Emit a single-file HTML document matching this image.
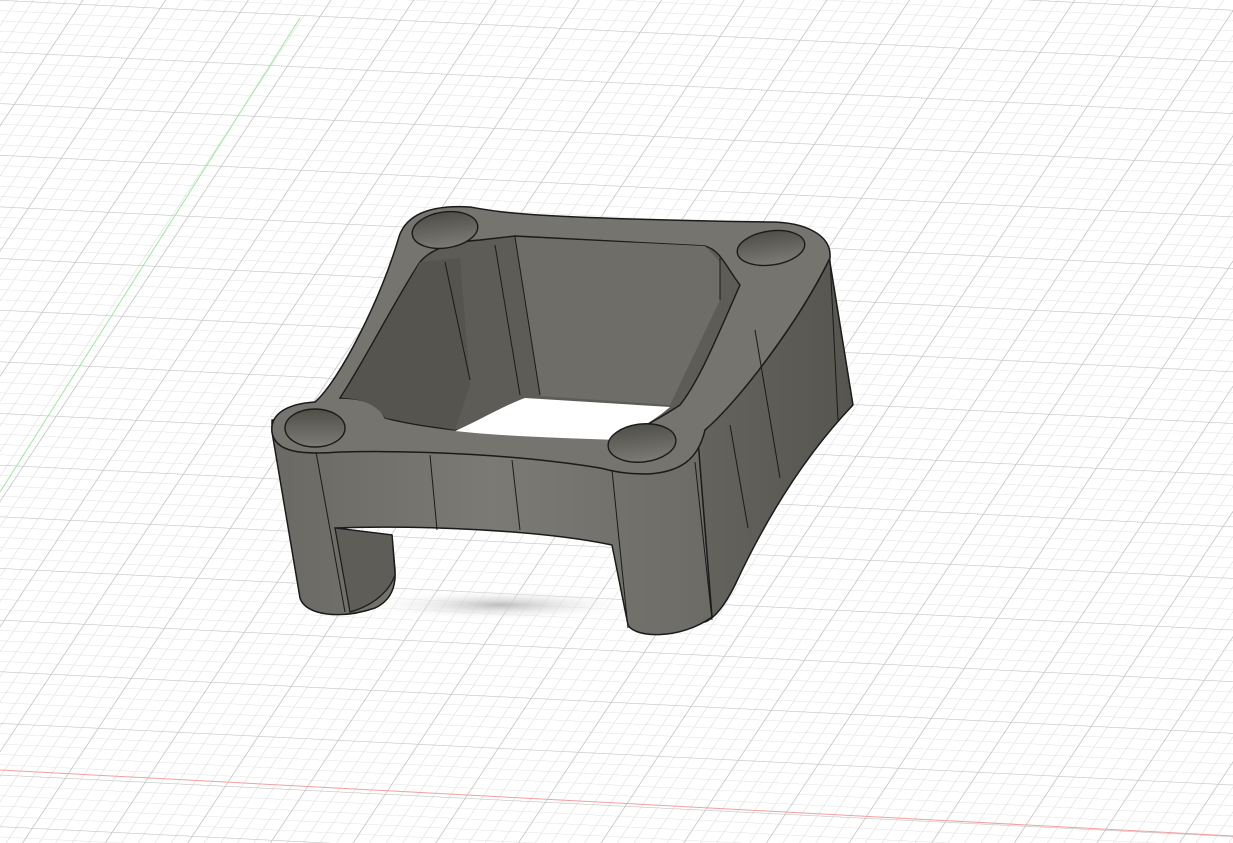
<!DOCTYPE html>
<html><head><meta charset="utf-8"><style>html,body{margin:0;padding:0;background:#fff;overflow:hidden}svg{display:block}</style></head>
<body>
<svg width="1233" height="843" viewBox="0 0 1233 843" xmlns="http://www.w3.org/2000/svg">
<defs>
<pattern id="minor" width="10" height="10" patternUnits="userSpaceOnUse" patternTransform="matrix(1.6 0.08 -0.66 1.0 0 0)">
<path d="M0 0H10M0 0V10" stroke="#dedede" stroke-width="0.9" fill="none"/>
</pattern>
<pattern id="major" width="50" height="50" patternUnits="userSpaceOnUse" patternTransform="matrix(1.6 0.08 -0.66 1.0 0 0)">
<path d="M0 0H50M0 0V50" stroke="#c2c2c2" stroke-width="1" fill="none"/>
</pattern>
<linearGradient id="front" x1="0" x2="1"><stop offset="0" stop-color="#6a6964"/><stop offset="0.5" stop-color="#7b7a74"/><stop offset="1" stop-color="#6c6b66"/></linearGradient>
<linearGradient id="right" x1="0" x2="1"><stop offset="0" stop-color="#65645f"/><stop offset="1" stop-color="#56554f"/></linearGradient>
<linearGradient id="hole" x1="0" y1="0" x2="0" y2="1"><stop offset="0" stop-color="#4f4e49"/><stop offset="1" stop-color="#7c7b75"/></linearGradient>
<radialGradient id="sh" cx="0.5" cy="0.5" r="0.5"><stop offset="0" stop-color="#bdbdbd"/><stop offset="1" stop-color="#fff" stop-opacity="0"/></radialGradient>
</defs>
<rect width="1233" height="843" fill="#fff"/>
<rect width="1233" height="843" fill="url(#minor)"/>
<rect width="1233" height="843" fill="url(#major)"/>
<line x1="300" y1="18" x2="0" y2="492" stroke="#9ee69e" stroke-width="1"/>
<line x1="0" y1="770" x2="1233" y2="836" stroke="#f2a0a0" stroke-width="1"/>
<ellipse cx="500" cy="605" rx="140" ry="16" fill="url(#sh)"/>
<!-- right wall -->
<path d="M688 470 L700 420 C740 380 800 320 828 250 L853 405 C810 450 770 510 735 585 C725 605 715 618 705 622 Z" fill="url(#right)" stroke="#1a1a1a" stroke-width="1.5" stroke-linejoin="round"/>
<!-- front wall -->
<path d="M272 432 L300 598 C305 615 340 620 375 608 C392 600 396 585 395 570 L392 535 L335 528 C420 525 540 530 612 545 L628 625 C635 638 680 640 712 617 L698 440 L272 420 Z" fill="url(#front)" stroke="#1a1a1a" stroke-width="1.5" stroke-linejoin="round"/>
<!-- leg inner -->
<path d="M335 528 L392 535 L395 575 C390 590 375 605 350 612 Z" fill="#5e5d58" stroke="#1a1a1a" stroke-width="1.2"/>
<!-- top face -->
<path d="M272 432 C270 415 285 404 315 402 C340 380 380 300 398 240 C405 212 435 205 470 207 C500 212 520 218 770 222 C805 222 832 235 830 258 C800 320 740 400 705 430 C698 460 680 472 648 474 C620 474 610 470 600 468 C520 455 420 450 340 452 C300 455 275 452 272 432 Z" fill="#75746e" stroke="#1a1a1a" stroke-width="1.5" stroke-linejoin="round"/>
<!-- opening -->
<path d="M340 398 C365 360 395 300 420 262 C430 250 450 242 480 240 L515 236 L705 246 C720 250 725 265 740 285 C720 330 700 380 680 405 C665 415 655 420 645 426 C600 438 560 438 455 430 C420 426 400 422 385 418 C380 405 365 398 340 398 Z" fill="#5d5c57" stroke="#1a1a1a" stroke-width="1.4"/>
<path d="M515 237 L705 246 L720 262 L720 300 L670 405 L540 396 Z" fill="#6e6d68"/>
<path d="M420 262 L460 258 L470 385 L455 430 L385 418 C378 405 360 398 342 398 Z" fill="#55544f"/>
<path d="M455 431 C480 420 505 405 525 398 L670 407 C655 420 640 428 618 440 C560 438 500 436 455 431 Z" fill="#fff"/>
<path d="M515 237 L540 395 M445 262 L470 380 M495 245 L520 395 M720 258 L720 300" stroke="#1a1a1a" stroke-width="1" fill="none"/>
<!-- holes -->
<ellipse cx="315" cy="428" rx="30" ry="19" fill="url(#hole)" stroke="#1a1a1a" stroke-width="1.4"/>
<ellipse cx="445" cy="230" rx="33" ry="18" transform="rotate(-8 445 230)" fill="url(#hole)" stroke="#1a1a1a" stroke-width="1.4"/>
<ellipse cx="771" cy="248" rx="34" ry="17" transform="rotate(-8 771 248)" fill="url(#hole)" stroke="#1a1a1a" stroke-width="1.4"/>
<ellipse cx="642" cy="443" rx="34" ry="19" transform="rotate(-6 642 443)" fill="url(#hole)" stroke="#1a1a1a" stroke-width="1.4"/>
<!-- edge lines -->
<path d="M316 452 L345 612 M430 455 L437 530 M512 460 L520 530 M612 470 L628 628 M695 462 L712 620 M730 425 L748 528 M755 330 L780 478 M830 258 L838 420" stroke="#1a1a1a" stroke-width="1" fill="none"/>
</svg>
</body></html>
